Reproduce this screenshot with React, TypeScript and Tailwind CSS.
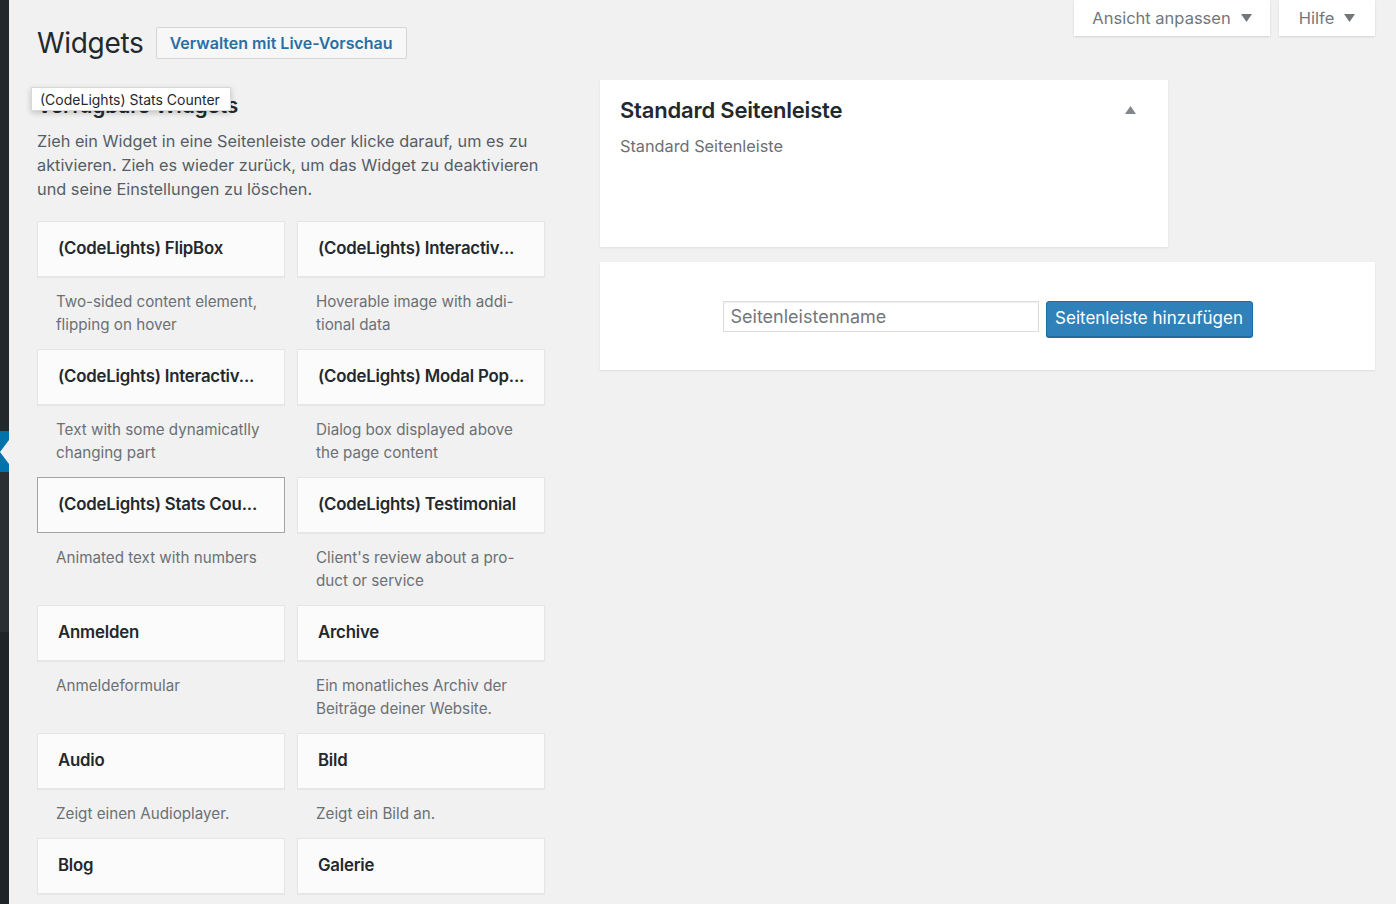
import React from "react";

type W = { title: string; desc: string; selected?: boolean };

const widgets: W[] = [
  { title: "(CodeLights) FlipBox", desc: "Two-sided content element, flipping on hover" },
  { title: "(CodeLights) Interactiv...", desc: "Hoverable image with addi-tional data" },
  { title: "(CodeLights) Interactiv...", desc: "Text with some dynamicatlly changing part" },
  { title: "(CodeLights) Modal Pop...", desc: "Dialog box displayed above the page content" },
  { title: "(CodeLights) Stats Cou...", desc: "Animated text with numbers", selected: true },
  { title: "(CodeLights) Testimonial", desc: "Client's review about a pro-duct or service" },
  { title: "Anmelden", desc: "Anmeldeformular" },
  { title: "Archive", desc: "Ein monatliches Archiv der Beiträge deiner Website." },
  { title: "Audio", desc: "Zeigt einen Audioplayer." },
  { title: "Bild", desc: "Zeigt ein Bild an." },
  { title: "Blog", desc: "" },
  { title: "Galerie", desc: "" },
];

function Caret({ up = false }: { up?: boolean }) {
  return (
    <svg width="11" height="8" viewBox="0 0 11 8" className="shrink-0">
      {up ? <polygon points="0,8 11,8 5.5,0" fill="#82878c" /> : <polygon points="0,0 11,0 5.5,8" fill="#72777c" />}
    </svg>
  );
}

export default function App() {
  return (
    <div
      className="flex min-h-screen w-full overflow-hidden bg-[#f1f1f1] text-[#23282d]"
      style={{ fontFamily: "Inter, 'Noto Sans', sans-serif" }}
    >
      {/* admin menu edge */}
      <div className="flex w-[9px] shrink-0 flex-col bg-[#23282d]">
        <div className="h-[431px]" />
        <div className="relative h-[41px] bg-[#0073aa]">
          <svg width="9" height="24" viewBox="0 0 9 24" className="absolute left-0 top-[9px]">
            <polygon points="9,0 9,24 0,12" fill="#f1f1f1" />
          </svg>
        </div>
        <div className="h-[160px] bg-[#2a2f34]" />
        <div className="flex-1 bg-[#1f2429]" />
      </div>

      <div className="flex flex-1 flex-col pl-[28px] pr-[21px]">
        {/* header */}
        <div className="flex h-[59px] items-start justify-between">
          <div className="mt-[27px] flex items-center gap-[12px]">
            <h1 className="text-[28px] font-normal leading-[32px] tracking-[-0.3px] text-[#23282d]">Widgets</h1>
            <div className="flex h-[32px] w-[251px] items-center justify-center rounded-[2px] border border-[#d5d5d5] bg-[#f7f7f7] text-[16px] font-semibold text-[#2a6fa3]">
              Verwalten mit Live-Vorschau
            </div>
          </div>
          <div className="flex gap-[9px]">
            <div className="flex h-[36px] w-[196px] items-center justify-center gap-[10px] bg-white text-[16.5px] text-[#72777c] shadow-[0_1px_2px_rgba(0,0,0,0.12)]">
              Ansicht anpassen <Caret />
            </div>
            <div className="flex h-[36px] w-[96px] items-center justify-center gap-[10px] bg-white text-[16.5px] text-[#72777c] shadow-[0_1px_2px_rgba(0,0,0,0.12)]">
              Hilfe <Caret />
            </div>
          </div>
        </div>

        {/* body */}
        <div className="flex gap-[55px]">
          {/* left column */}
          <div className="relative w-[508px] shrink-0">
            <h2 className="mt-[35px] whitespace-nowrap text-[21px] font-semibold leading-[24px] tracking-[-0.2px] text-[#23282d]">
              Verfügbare Widgets
            </h2>
            <div className="absolute left-[-6px] top-[28px] flex h-[24px] w-[200px] items-center border border-[#d8d8d8] bg-white pl-[8px] text-[14px] text-[#23282d] shadow-[0_2px_6px_rgba(0,0,0,0.2)]">
              (CodeLights) Stats Counter
            </div>
            <p className="mt-[11px] text-[16.3px] leading-[24px] text-[#555d66]">
              Zieh ein Widget in eine Seitenleiste oder klicke darauf, um es zu aktivieren. Zieh es wieder zurück, um das Widget zu deaktivieren und seine Einstellungen zu löschen.
            </p>
            <div className="mt-[20px] grid grid-cols-2 gap-x-[12px]">
              {widgets.map((w, i) => (
                <div key={i}>
                  <div
                    className={
                      w.selected
                        ? "flex h-[56px] items-center whitespace-nowrap border border-[#a0a5aa] bg-[#fbfbfb] px-[20px] text-[16.8px] font-semibold tracking-[-0.2px] text-[#23282d]"
                        : "flex h-[56px] items-center whitespace-nowrap border border-[#e5e5e5] bg-[#fbfbfb] px-[20px] text-[16.8px] font-semibold tracking-[-0.2px] text-[#23282d] shadow-[0_1px_1px_rgba(0,0,0,0.04)]"
                    }
                  >
                    {w.title}
                  </div>
                  {w.desc && (
                    <div className="pb-[13px] pl-[19px] pr-[20px] pt-[13px] text-[15.2px] leading-[23px] text-[#6b7075]">
                      {w.desc}
                    </div>
                  )}
                </div>
              ))}
            </div>
          </div>

          {/* right column */}
          <div className="flex flex-1 flex-col gap-[15px] pt-[21px]">
            <div className="h-[167px] w-[568px] bg-white px-[20px] pt-[16px] shadow-[0_1px_2px_rgba(0,0,0,0.08)]">
              <div className="flex items-center justify-between pr-[12px]">
                <h2 className="text-[22px] font-semibold leading-[28px] tracking-[-0.2px] text-[#23282d]">Standard Seitenleiste</h2>
                <Caret up />
              </div>
              <div className="mt-[10px] text-[16.3px] leading-[24px] text-[#6b7075]">Standard Seitenleiste</div>
            </div>
            <div className="flex h-[108px] items-start justify-center gap-[7px] bg-white pt-[39px] shadow-[0_1px_2px_rgba(0,0,0,0.08)]">
              <div className="flex h-[31px] w-[316px] items-center border border-[#dcdcdc] bg-white pl-[7px] text-[18px] text-[#72777c] shadow-[inset_0_1px_2px_rgba(0,0,0,0.07)]">
                Seitenleistenname
              </div>
              <div className="flex h-[36px] w-[207px] items-center justify-center rounded-[3px] border border-[#1f6d9e] bg-[#2e82b9] text-[17px] text-white shadow-[0_1px_0_#1f6d9e]">
                Seitenleiste hinzufügen
              </div>
            </div>
          </div>
        </div>
      </div>
    </div>
  );
}
